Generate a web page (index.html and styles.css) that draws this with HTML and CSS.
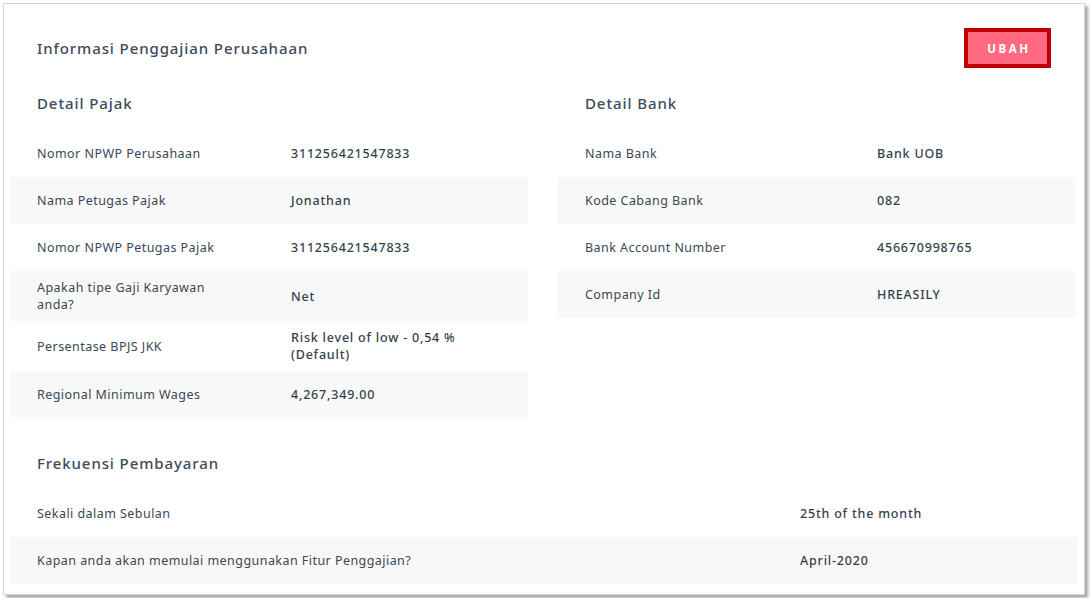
FILE: index.html
```html
<!DOCTYPE html>
<html>
<head>
<meta charset="utf-8">
<link rel="stylesheet" href="styles.css">
</head>
<body>
<div class="card">
  <div class="header">
    <h1 class="title">Informasi Penggajian Perusahaan</h1>
    <button class="btn">UBAH</button>
  </div>
  <div class="cols">
    <div class="col col-left">
      <h2 class="sec-title">Detail Pajak</h2>
      <div class="row"><div class="lbl">Nomor NPWP Perusahaan</div><div class="val">311256421547833</div></div>
      <div class="row alt"><div class="lbl">Nama Petugas Pajak</div><div class="val">Jonathan</div></div>
      <div class="row"><div class="lbl">Nomor NPWP Petugas Pajak</div><div class="val">311256421547833</div></div>
      <div class="row alt"><div class="lbl">Apakah tipe Gaji Karyawan anda?</div><div class="val">Net</div></div>
      <div class="row"><div class="lbl">Persentase BPJS JKK</div><div class="val">Risk level of low - 0,54 % (Default)</div></div>
      <div class="row alt"><div class="lbl">Regional Minimum Wages</div><div class="val">4,267,349.00</div></div>
    </div>
    <div class="col col-right">
      <h2 class="sec-title">Detail Bank</h2>
      <div class="row"><div class="lbl">Nama Bank</div><div class="val">Bank UOB</div></div>
      <div class="row alt"><div class="lbl">Kode Cabang Bank</div><div class="val">082</div></div>
      <div class="row"><div class="lbl">Bank Account Number</div><div class="val">456670998765</div></div>
      <div class="row alt"><div class="lbl">Company Id</div><div class="val">HREASILY</div></div>
    </div>
  </div>
  <div class="freq">
    <h2 class="sec-title sec-freq">Frekuensi Pembayaran</h2>
    <div class="row"><div class="lbl">Sekali dalam Sebulan</div><div class="val">25th of the month</div></div>
    <div class="row alt"><div class="lbl">Kapan anda akan memulai menggunakan Fitur Penggajian?</div><div class="val">April-2020</div></div>
  </div>
</div>
</body>
</html>
```

FILE: styles.css
```css
* { box-sizing: border-box; }
html, body { margin: 0; padding: 0; background: #ffffff; }
body {
  padding: 3px;
  font-family: "Noto Sans", "Open Sans", sans-serif;
  color: #3a4757;
}
.card {
  width: 1082px;
  height: 592px;
  border: 1px solid #d6d6d6;
  background: #fff;
  box-shadow: 3px 3px 3px rgba(0,0,0,0.35);
  padding: 0 7px 9px 6px;
}
.header {
  display: flex;
  align-items: center;
  justify-content: space-between;
  padding: 24px 26px 0 27px;
  height: 64px;
}
.title {
  margin: 0;
  font-size: 15px;
  font-weight: 500;
  letter-spacing: 0.9px;
  line-height: 20px;
  color: #3c4a5c;
}
.btn {
  width: 87px;
  height: 40px;
  border: 4px solid #c00000;
  background: #ff6a80;
  color: #fff;
  font-family: "Noto Sans", sans-serif;
  font-weight: 700;
  font-size: 11.5px;
  letter-spacing: 2.6px;
  padding: 0 0 0 3px;
}
.cols {
  display: flex;
  gap: 29px;
}
.col { flex: 0 0 518px; }
.col-right { flex: 0 0 519px; }
.sec-title {
  margin: 0;
  padding: 25px 0 17px 27px;
  font-size: 15px;
  font-weight: 500;
  letter-spacing: 0.9px;
  line-height: 20px;
  color: #3c4a5c;
}
.col-right .sec-title { padding-left: 28px; }
.sec-freq { padding-top: 36px; }
.row {
  display: grid;
  grid-template-columns: 254px 1fr;
  align-items: center;
  min-height: 47px;
  padding: 8px 0 8px 27px;
  font-size: 12.5px;
  line-height: 17px;
  letter-spacing: 0.45px;
}
.col-left .row:last-child { min-height: 46px; }
.row.alt { background: #f8f8f8; }
.col-left .lbl { padding-right: 60px; }
.col-right .row { grid-template-columns: 292px 1fr; padding-left: 28px; }
.freq .row { grid-template-columns: 763px 1fr; }
.val {
  font-weight: 500;
  color: #333f4e;
  letter-spacing: 0.8px;
}
.col-left .val { padding-right: 60px; }
```
